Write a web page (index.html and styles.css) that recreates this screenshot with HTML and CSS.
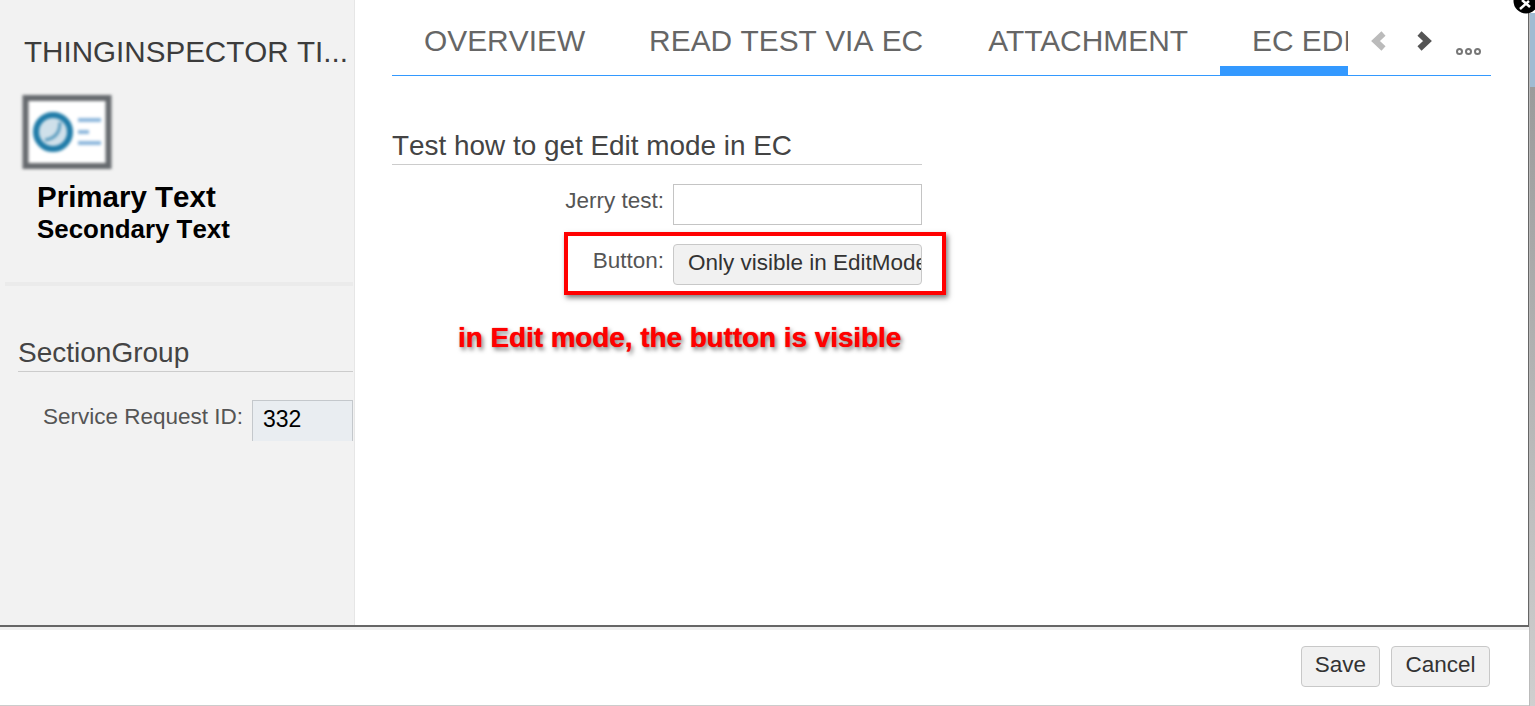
FILE: index.html
```html
<!DOCTYPE html>
<html lang="en">
<head>
    <meta charset="UTF-8">
    <meta name="viewport" content="width=device-width, initial-scale=1.0">
    <title>Thing Inspector</title>
    <link rel="stylesheet" href="styles.css">
</head>
<body>
    <div class="dialog">
        <div class="main">
            <aside class="sidebar">
                <h1 class="thing-title">ThingInspector Ti...</h1>
                <svg class="thing-icon" viewBox="0 0 90 76" width="90" height="76">
                    <rect x="3.5" y="4" width="83" height="68" fill="#fff" stroke="#666a6e" stroke-width="6"/>
                    <circle cx="31" cy="38" r="17" fill="#cfe0ea" stroke="#1f7ba8" stroke-width="6"/>
                    <path d="M23 46 Q38 44 38 28" fill="none" stroke="#5d9dbf" stroke-width="3"/>
                    <path d="M56 26H79M56 38H67M56 49H79" fill="none" stroke="#8db7dc" stroke-width="4"/>
                </svg>
                <div class="primary-text">Primary Text</div>
                <div class="secondary-text">Secondary Text</div>
                <div class="side-divider"></div>
                <h2 class="side-group">SectionGroup</h2>
                <div class="side-row">
                    <label class="side-label">Service Request ID:</label>
                    <div class="side-value">332</div>
                </div>
            </aside>

            <section class="content">
                <div class="tabbar">
                    <div class="tabs">
                        <a class="tab">OVERVIEW</a>
                        <a class="tab">READ TEST VIA EC</a>
                        <a class="tab kerned">ATTACHMENT</a>
                        <a class="tab active">EC EDIT MODE</a>
                    </div>
                    <svg class="arrow prev" viewBox="0 0 16 18" width="16" height="18"><path d="M12.5 1.5L4.5 9L12.5 16.5" /></svg>
                    <svg class="arrow next" viewBox="0 0 16 18" width="16" height="18"><path d="M3.5 1.5L11.5 9L3.5 16.5" /></svg>
                    <div class="more"><i></i><i></i><i></i></div>
                </div>

                <div class="form">
                    <h3 class="form-title">Test how to get Edit mode in EC</h3>
                    <div class="form-row">
                        <label class="form-label">Jerry test:</label>
                        <input class="form-input" type="text">
                    </div>
                    <div class="form-row">
                        <label class="form-label">Button:</label>
                        <button class="btn btn-clip"><span>Only visible in EditMode</span></button>
                    </div>
                    <div class="red-box"></div>
                    <div class="note">in Edit mode, the button is visible</div>
                </div>
            </section>
        </div>

        <footer class="footer">
            <button class="btn save">Save</button>
            <button class="btn cancel">Cancel</button>
        </footer>
    </div>

    <div class="edge"></div>
    <div class="scrollbar"><div class="thumb"></div></div>
    <svg class="close" viewBox="0 0 22 14" width="22" height="14">
        <circle cx="13" cy="1" r="12.5" fill="#000"/>
        <path d="M7 9L16 1M9 0L17 7" stroke="#fff" stroke-width="2.5"/>
    </svg>
</body>
</html>
```

FILE: styles.css
```css
html, body { margin: 0; height: 706px; overflow: hidden; background: #fff; }
body { font-family: "Liberation Sans", Arial, sans-serif; color: #333; font-kerning: none; }

.dialog { display: flex; flex-direction: column; height: 706px; width: 1529px; }
.main { display: flex; height: 625px; }

.sidebar { flex: none; width: 355px; box-sizing: border-box; background: #f2f2f2; border-right: 1px solid #e6e6e6; padding-top: 34px; }
.thing-title { margin: 0 0 0 24px; font-size: 29.6px; line-height: 36px; font-weight: normal; color: #3c3c3c; text-transform: uppercase; white-space: nowrap; }
.thing-icon { display: block; margin: 24px 0 0 22px; filter: blur(1.5px); }
.primary-text { margin: 9px 0 0 37px; font-size: 29.5px; line-height: 36px; font-weight: bold; color: #000; }
.secondary-text { margin: 0 0 0 37px; font-size: 25.9px; line-height: 28px; font-weight: bold; color: #000; }
.side-divider { height: 4px; margin: 39px 1px 0 5px; background: #ebebeb; }
.side-group { margin: 49px 1px 0 18px; font-size: 28px; line-height: 36px; font-weight: normal; color: #444; border-bottom: 1px solid #ccc; }
.side-row { display: flex; margin-top: 28px; height: 41px; }
.side-label { width: 243px; text-align: right; font-size: 22.5px; line-height: 34px; color: #555; }
.side-value { width: 101px; margin-left: 9px; box-sizing: border-box; background: #e9edf1; border: 1px solid #c4c8cc; border-bottom: none; padding-left: 10px; font-size: 23px; line-height: 36px; color: #000; }

.content { flex: 1; padding: 0 38px 0 37px; position: relative; }
.tabbar { display: flex; height: 75px; border-bottom: 1px solid #3399ff; position: relative; }
.tabs { display: flex; flex: none; width: 956px; overflow: hidden; }
.tab { flex: none; padding: 23px 32px 0; font-size: 29.9px; line-height: 36px; color: #666; white-space: nowrap; }
.tab.kerned { font-kerning: normal; margin-left: 1px; }
.tab.active { width: 128px; box-sizing: border-box; padding-right: 0; overflow: hidden; border-bottom: 9px solid #3399ff; height: 75px; }
.arrow { flex: none; margin-top: 32px; filter: blur(0.4px); overflow: visible; }
.arrow path { fill: none; stroke-width: 6; }
.prev { margin-left: 23px; }
.prev path { stroke: #bbb; }
.next { margin-left: 29px; }
.next path { stroke: #555; }
.more { display: flex; gap: 2px; margin: 48px 0 0 24px; height: 7px; }
.more i { width: 3px; height: 3px; border: 2px solid #777; border-radius: 50%; }

.form { width: 530px; position: relative; padding-top: 51px; }
.form-title { margin: 0 0 19px; font-size: 27.9px; line-height: 37px; font-weight: normal; color: #444; border-bottom: 1px solid #ccc; }
.form-row { display: flex; height: 41px; margin-bottom: 19px; }
.form-label { width: 272px; margin-right: 9px; text-align: right; font-size: 22.5px; line-height: 33px; color: #555; }
.form-input { width: 249px; height: 41px; box-sizing: border-box; border: 1px solid #c4c4c4; padding: 0; background: #fff; }

.btn { box-sizing: border-box; height: 41px; border: 1px solid #c8c8c8; border-radius: 4px; background: #f1f1f1; color: #333; font-family: inherit; font-kerning: none; font-size: 22.5px; padding: 0 0 3px; }
.btn-clip { width: 249px; overflow: hidden; text-align: left; padding-left: 14px; white-space: nowrap; }
.btn-clip span { display: block; width: 300px; }

.red-box { position: absolute; left: 172px; top: 156px; width: 374px; height: 55px; border: 4px solid #ff0000; box-shadow: 2px 3px 5px rgba(0, 0, 0, 0.5); }
.note { position: absolute; left: 66px; top: 245px; font-size: 27.8px; line-height: 34px; font-weight: bold; color: #ff0000; white-space: nowrap; text-shadow: 2px 3px 4px rgba(0, 0, 0, 0.5), 0 0 1px #ff0000; }

.footer { flex: none; display: flex; justify-content: flex-end; gap: 11px; height: 81px; box-sizing: border-box; border-top: 2px solid #666; border-bottom: 1px solid #ccc; box-shadow: inset 0 3px 0 #f0f0f0; padding: 19px 39px 0 0; }
.footer .btn { padding-bottom: 4px; }
.save { width: 79px; }
.cancel { width: 99px; }

.edge { position: absolute; left: 1528px; top: 13px; width: 1px; height: 613px; background: #666; }
.scrollbar { position: absolute; left: 1529px; top: 13px; width: 6px; height: 693px; border-left: 1px solid #bbb; box-sizing: border-box; background: linear-gradient(#959595, #cfcfcf); }
.thumb { height: 74px; background: #a0bbd2; }
.close { position: absolute; left: 1513px; top: 0; }
```
